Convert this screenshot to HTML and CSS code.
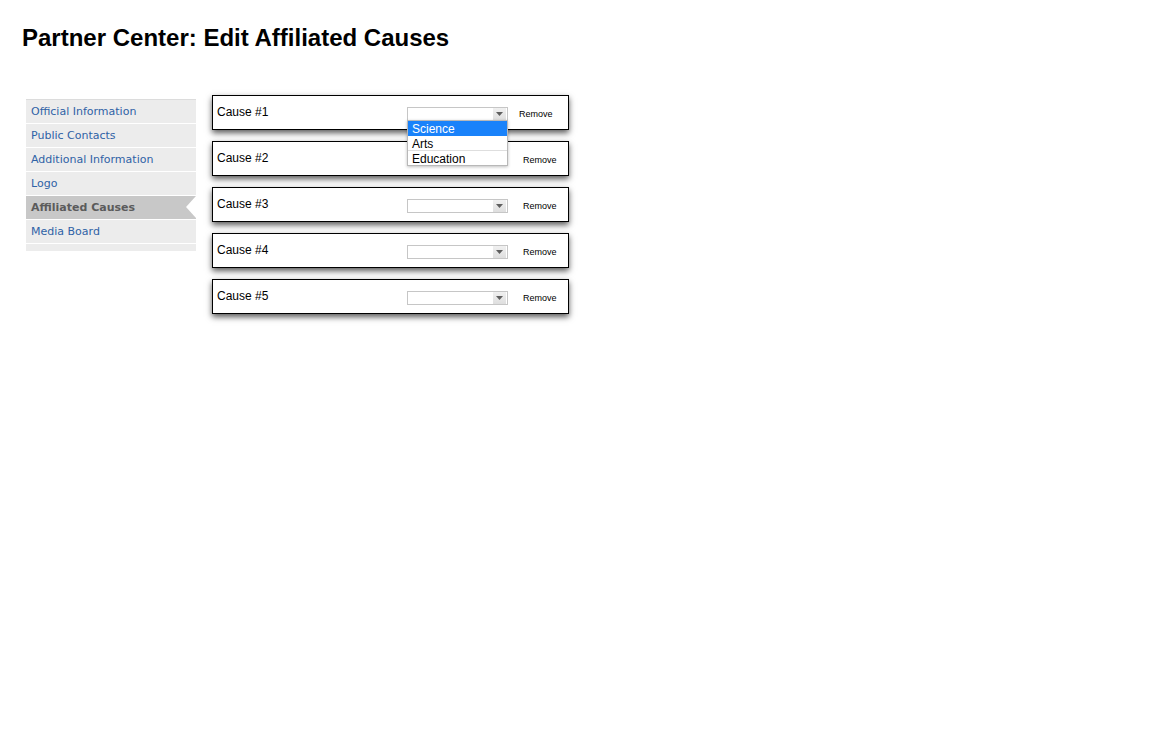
FILE: index.html
```html
<!DOCTYPE html>
<html lang="en">
<head>
<meta charset="utf-8">
<title>Partner Center: Edit Affiliated Causes</title>
<link rel="stylesheet" href="styles.css">
</head>
<body>
<div class="page">
  <h1 class="title">Partner Center: Edit Affiliated Causes</h1>
  <div class="layout">
    <nav class="sidenav">
      <a class="nav-item" href="#">Official Information</a>
      <a class="nav-item" href="#">Public Contacts</a>
      <a class="nav-item" href="#">Additional Information</a>
      <a class="nav-item" href="#">Logo</a>
      <a class="nav-item nav-item--active" href="#">Affiliated Causes</a>
      <a class="nav-item" href="#">Media Board</a>
      <div class="nav-foot"></div>
    </nav>
    <main class="causes">
      <div class="cause">
        <span class="cause-label">Cause #1</span>
        <div class="select select--open">
          <span class="select-value"></span>
          <span class="select-arrow"><svg width="7" height="4" viewBox="0 0 7 4"><path d="M0 0h7L3.5 4z" fill="#5f5f5f"/></svg></span>
          <ul class="select-list">
            <li class="select-option select-option--active">Science</li>
            <li class="select-option">Arts</li>
            <li class="select-option">Education</li>
          </ul>
        </div>
        <a class="remove remove--shifted" href="#">Remove</a>
      </div>
      <div class="cause">
        <span class="cause-label">Cause #2</span>
        <div class="select select--hidden"></div>
        <a class="remove" href="#">Remove</a>
      </div>
      <div class="cause">
        <span class="cause-label">Cause #3</span>
        <div class="select">
          <span class="select-value"></span>
          <span class="select-arrow"><svg width="7" height="4" viewBox="0 0 7 4"><path d="M0 0h7L3.5 4z" fill="#5f5f5f"/></svg></span>
        </div>
        <a class="remove" href="#">Remove</a>
      </div>
      <div class="cause">
        <span class="cause-label">Cause #4</span>
        <div class="select">
          <span class="select-value"></span>
          <span class="select-arrow"><svg width="7" height="4" viewBox="0 0 7 4"><path d="M0 0h7L3.5 4z" fill="#5f5f5f"/></svg></span>
        </div>
        <a class="remove" href="#">Remove</a>
      </div>
      <div class="cause">
        <span class="cause-label">Cause #5</span>
        <div class="select">
          <span class="select-value"></span>
          <span class="select-arrow"><svg width="7" height="4" viewBox="0 0 7 4"><path d="M0 0h7L3.5 4z" fill="#5f5f5f"/></svg></span>
        </div>
        <a class="remove" href="#">Remove</a>
      </div>
    </main>
  </div>
</div>
</body>
</html>
```

FILE: styles.css
```css
* { box-sizing: border-box; }

html, body {
  margin: 0;
  padding: 0;
  background: #ffffff;
}

body {
  font-family: "Liberation Sans", Arial, Helvetica, sans-serif;
  color: #000;
}

.page {
  min-height: 100vh;
  padding: 24px 22px 40px 22px;
}

.title {
  margin: 0;
  font-size: 24px;
  line-height: 28px;
  font-weight: bold;
  color: #000;
}

.layout {
  display: flex;
  align-items: flex-start;
  margin-top: 43px;
}

/* Sidebar */
.sidenav {
  width: 170px;
  margin-left: 4px;
  margin-top: 4px;
  border-top: 1px solid #dcdcdc;
  display: flex;
  flex-direction: column;
  font-family: "DejaVu Sans", Verdana, sans-serif;
  font-size: 11px;
}

.nav-item {
  position: relative;
  display: block;
  height: 24px;
  padding-top: 1px;
  line-height: 22px;
  padding-left: 5px;
  background: #ececec;
  border-bottom: 1px solid #ffffff;
  color: #2f62a6;
  text-decoration: none;
}

.nav-item--active {
  background: #c8c8c8;
  color: #5b5b5b;
  font-weight: bold;
}

.nav-item--active::after {
  content: "";
  position: absolute;
  right: 0;
  top: 0;
  width: 0;
  height: 0;
  border-top: 11.5px solid transparent;
  border-bottom: 11.5px solid transparent;
  border-right: 10px solid #ffffff;
}

.nav-foot {
  height: 7px;
  background: #ececec;
}

/* Causes */
.causes {
  margin-left: 16px;
  display: flex;
  flex-direction: column;
  gap: 11px;
}

.cause {
  width: 357px;
  height: 35px;
  border: 1px solid #000;
  background: #fff;
  box-shadow: 0 3px 6px rgba(0, 0, 0, 0.65);
  display: flex;
  align-items: flex-start;
  padding-left: 4px;
}

.cause-label {
  width: 190px;
  margin-top: 9px;
  font-size: 12px;
  line-height: 14px;
}

.select {
  position: relative;
  width: 101px;
  height: 14px;
  margin-top: 11px;
  border: 1px solid #c6c6c6;
  background: #fff;
  display: flex;
}

.select--hidden {
  visibility: hidden;
}

.select-value {
  flex: 1;
}

.select-arrow {
  width: 13px;
  height: 12px;
  margin: 0 1px 0 0;
  background: linear-gradient(#f0f0f0, #dedede);
  display: flex;
  align-items: center;
  justify-content: center;
}

.select-list {
  position: absolute;
  left: -1px;
  top: 12px;
  width: 101px;
  margin: 0;
  padding: 0;
  list-style: none;
  background: #fff;
  border: 1px solid #b8b8b8;
  box-shadow: 0 1px 3px rgba(0, 0, 0, 0.25);
  z-index: 10;
}

.select-option {
  height: 15px;
  padding-top: 1px;
  line-height: 14px;
  padding-left: 4px;
  font-size: 12px;
  border-bottom: 1px solid #dedede;
  color: #000;
}

.select-option:last-child {
  height: 14px;
  border-bottom: none;
}

.select-option--active {
  background: #1982fa;
  color: #fff;
  border-bottom-color: #1982fa;
}

.remove {
  margin-top: 13px;
  margin-left: 15px;
  font-size: 9px;
  line-height: 11px;
  color: #000;
  text-decoration: none;
}

.remove--shifted {
  margin-left: 11px;
}
```
